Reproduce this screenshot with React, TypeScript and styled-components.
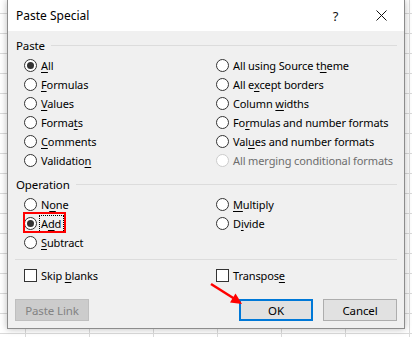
import React from "react";
import styled, { createGlobalStyle, css } from "styled-components";

const Global = createGlobalStyle`
  html, body { margin: 0; padding: 0; background: #fff; }
  body { font-family: "Noto Sans", "Open Sans", sans-serif; }
`;

const FONT = `"Noto Sans", "Open Sans", sans-serif`;

const Sheet = styled.div`
  position: relative;
  width: 412px;
  height: 337px;
  overflow: hidden;
  background-color: #fff;
  background-image: linear-gradient(to bottom, #dadada 1px, transparent 1px),
    linear-gradient(to right, #dadada 1px, transparent 1px);
  background-size: 64px 20px;
  background-position: 25px 13px;
  padding-left: 7px;
  box-sizing: border-box;
`;

const Dialog = styled.div`
  width: 398px;
  height: 329px;
  box-sizing: border-box;
  border: 1px solid #8c8c8c;
  border-top: none;
  background: #f0f0f0;
  box-shadow: 0 0 7px rgba(0, 0, 0, 0.28);
  font-family: ${FONT};
  font-size: 11px;
  letter-spacing: -0.12px;
  color: #000;
  display: flex;
  flex-direction: column;
`;

const TitleBar = styled.div`
  height: 31px;
  background: #fff;
  display: flex;
  align-items: center;
  padding-left: 8px;
  flex: none;
`;

const Title = styled.div`
  flex: 1;
  font-size: 12px;
  letter-spacing: 0;
`;

const TitleButton = styled.div<{ $w: number }>`
  width: ${(p) => p.$w}px;
  height: 31px;
  display: flex;
  align-items: center;
  justify-content: center;
  font-size: 13px;
  color: #111;
`;

const Body = styled.div`
  padding: 6px 7px 7px 7px;
  display: flex;
  flex-direction: column;
`;

const SectionHeader = styled.div<{ $top?: number }>`
  display: flex;
  align-items: center;
  height: 16px;
  margin-top: ${(p) => p.$top ?? 0}px;
  margin-bottom: 3px;
  padding-left: 1px;
  font-size: 11.5px;
`;

const HeaderLine = styled.div`
  flex: 1;
  height: 1px;
  background: #dcdcdc;
  margin-left: 6px;
`;

const OptionGrid = styled.div`
  display: grid;
  grid-template-columns: 192px 1fr;
  grid-auto-rows: 19px;
  padding-left: 9px;
`;

const OptionRow = styled.div<{ $disabled?: boolean }>`
  position: relative;
  display: flex;
  align-items: center;
  gap: 4px;
  height: 19px;
  white-space: nowrap;
  color: ${(p) => (p.$disabled ? "#6d6d6d" : "#000")};
`;

const Radio = styled.span<{ $checked?: boolean; $disabled?: boolean }>`
  width: 13px;
  height: 13px;
  box-sizing: border-box;
  border-radius: 50%;
  border: 1px solid ${(p) => (p.$disabled ? "#cccccc" : "#333")};
  background: #fff;
  display: flex;
  align-items: center;
  justify-content: center;
  flex: none;
  ${(p) =>
    p.$checked &&
    css`
      &::after {
        content: "";
        width: 7px;
        height: 7px;
        border-radius: 50%;
        background: #333;
      }
    `}
`;

const Check = styled.span`
  width: 13px;
  height: 13px;
  box-sizing: border-box;
  border: 1px solid #333;
  background: #fff;
  flex: none;
`;

const Label = styled.span<{ $focused?: boolean }>`
  line-height: 16px;
  ${(p) =>
    p.$focused &&
    css`
      outline: 1px dotted #000;
      outline-offset: 0;
      padding: 0 2px 0 1px;
      margin-left: -1px;
    `}
`;

const Key = styled.span`
  text-decoration: underline;
  text-underline-offset: 2px;
`;

const Highlight = styled.span`
  position: absolute;
  left: -1px;
  top: -2px;
  width: 43px;
  height: 21px;
  box-sizing: border-box;
  border: 2px solid #ff0000;
  pointer-events: none;
`;

const Divider = styled.div`
  height: 1px;
  background: #dcdcdc;
  margin-top: 7px;
`;

const CheckGrid = styled(OptionGrid)`
  margin-top: 6px;
`;

const ButtonBar = styled.div`
  display: flex;
  justify-content: space-between;
  margin-top: 14px;
`;

const ButtonGroup = styled.div`
  display: flex;
  gap: 10px;
`;

const Button = styled.div<{ $variant?: "default" | "primary" | "disabled" }>`
  width: 74px;
  height: 22px;
  box-sizing: border-box;
  display: flex;
  align-items: center;
  justify-content: center;
  background: #e1e1e1;
  border: 1px solid #adadad;
  color: #000;
  font-size: 11.5px;
  ${(p) =>
    p.$variant === "primary" &&
    css`
      border: 2px solid #0078d7;
    `}
  ${(p) =>
    p.$variant === "disabled" &&
    css`
      background: #cccccc;
      border-color: #bfbfbf;
      color: #838383;
    `}
`;

const Arrow = styled.svg`
  position: absolute;
  left: 0;
  top: 0;
  width: 412px;
  height: 337px;
  pointer-events: none;
`;

type Opt = {
  label: string;
  key?: number;
  checked?: boolean;
  disabled?: boolean;
  focused?: boolean;
  highlight?: boolean;
};

const withKey = (label: string, key?: number) => {
  if (key === undefined) return label;
  return (
    <>
      {label.slice(0, key)}
      <Key>{label[key]}</Key>
      {label.slice(key + 1)}
    </>
  );
};

const RadioOption: React.FC<{ o: Opt | null }> = ({ o }) => {
  if (!o) return <div />;
  return (
    <OptionRow $disabled={o.disabled}>
      <Radio $checked={o.checked} $disabled={o.disabled} />
      <Label $focused={o.focused}>{withKey(o.label, o.key)}</Label>
      {o.highlight && <Highlight />}
    </OptionRow>
  );
};

const pasteOptions: (Opt | null)[] = [
  { label: "All", key: 0, checked: true },
  { label: "All using Source theme", key: 18 },
  { label: "Formulas", key: 0 },
  { label: "All except borders", key: 5 },
  { label: "Values", key: 0 },
  { label: "Column widths", key: 7 },
  { label: "Formats", key: 5 },
  { label: "Formulas and number formats", key: 2 },
  { label: "Comments", key: 0 },
  { label: "Values and number formats", key: 3 },
  { label: "Validation", key: 9 },
  { label: "All merging conditional formats", disabled: true },
];

const operationOptions: (Opt | null)[] = [
  { label: "None", key: 1 },
  { label: "Multiply", key: 0 },
  { label: "Add", key: 1, checked: true, focused: true, highlight: true },
  { label: "Divide", key: 1 },
  { label: "Subtract", key: 0 },
  null,
];

const checks: Opt[] = [
  { label: "Skip blanks", key: 5 },
  { label: "Transpose", key: 8 },
];

export default function App() {
  return (
    <>
      <Global />
      <Sheet>
        <Dialog>
          <TitleBar>
            <Title>Paste Special</Title>
            <TitleButton $w={45}>?</TitleButton>
            <TitleButton $w={46}>
              <svg width="11" height="11" viewBox="0 0 11 11">
                <path d="M0.5 0.5 L10.5 10.5 M10.5 0.5 L0.5 10.5" stroke="#111" strokeWidth="1" />
              </svg>
            </TitleButton>
          </TitleBar>
          <Body>
            <SectionHeader>
              <span>Paste</span>
              <HeaderLine />
            </SectionHeader>
            <OptionGrid>
              {pasteOptions.map((o, i) => (
                <RadioOption key={i} o={o} />
              ))}
            </OptionGrid>
            <SectionHeader $top={6}>
              <span>Operation</span>
              <HeaderLine />
            </SectionHeader>
            <OptionGrid>
              {operationOptions.map((o, i) => (
                <RadioOption key={i} o={o} />
              ))}
            </OptionGrid>
            <Divider />
            <CheckGrid>
              {checks.map((c, i) => (
                <OptionRow key={i}>
                  <Check />
                  <Label>{withKey(c.label, c.key)}</Label>
                </OptionRow>
              ))}
            </CheckGrid>
            <ButtonBar>
              <Button $variant="disabled">Paste Link</Button>
              <ButtonGroup>
                <Button $variant="primary">OK</Button>
                <Button>Cancel</Button>
              </ButtonGroup>
            </ButtonBar>
          </Body>
        </Dialog>
        <Arrow viewBox="0 0 412 337">
          <line x1="211" y1="284" x2="234" y2="298.5" stroke="#ff0000" strokeWidth="2.5" />
          <polygon points="242,304 230,302.5 235.5,293.5" fill="#ff0000" />
        </Arrow>
      </Sheet>
    </>
  );
}
